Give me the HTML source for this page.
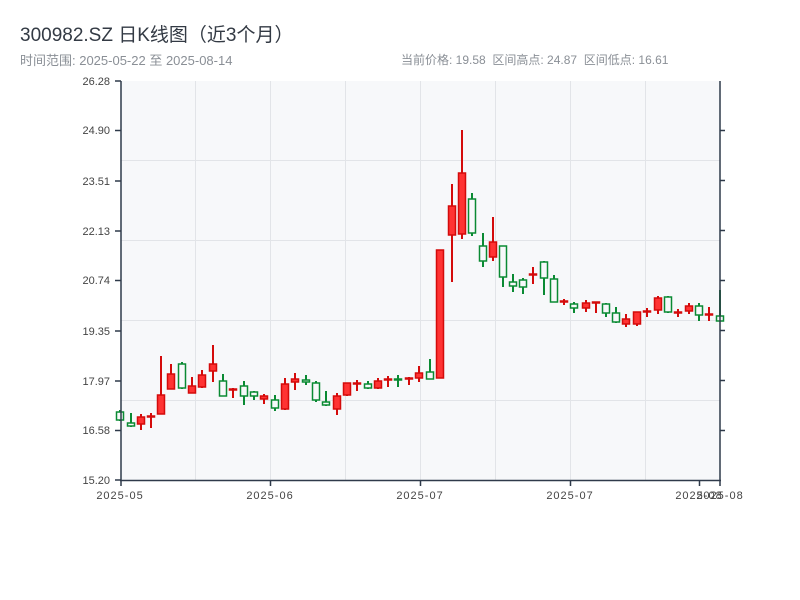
<!DOCTYPE html>
<html><head><meta charset="utf-8"><style>
body{margin:0;background:#fff;width:800px;height:600px;overflow:hidden;font-family:"Liberation Sans","Noto Sans CJK SC",sans-serif}
.t{position:absolute;left:20px;top:20px;font-size:19px;color:#333a44}
.s{position:absolute;left:20px;top:50px;font-size:13px;color:#8a8f96}
.r{position:absolute;left:401px;top:51px;font-size:12px;color:#8a8f96;white-space:pre}
svg{position:absolute;left:0;top:0}
</style></head><body>
<div class="t">300982.SZ 日K线图（近3个月）</div>
<div class="s">时间范围: 2025-05-22 至 2025-08-14</div>
<div class="r">当前价格: 19.58  区间高点: 24.87  区间低点: 16.61</div>
<svg id="c" width="800" height="600" xmlns="http://www.w3.org/2000/svg" font-family="Liberation Sans, sans-serif" font-size="11" fill="#444">
<rect x="121" y="81" width="599" height="399" fill="#f7f8fa"/>
<g stroke="#e2e4e8" stroke-width="1">
<line x1="195.5" y1="81" x2="195.5" y2="480"/><line x1="270.5" y1="81" x2="270.5" y2="480"/>
<line x1="345.5" y1="81" x2="345.5" y2="480"/><line x1="420.5" y1="81" x2="420.5" y2="480"/>
<line x1="495.5" y1="81" x2="495.5" y2="480"/><line x1="570.5" y1="81" x2="570.5" y2="480"/>
<line x1="645.5" y1="81" x2="645.5" y2="480"/>
<line x1="121" y1="160.5" x2="720" y2="160.5"/><line x1="121" y1="240.5" x2="720" y2="240.5"/>
<line x1="121" y1="320.5" x2="720" y2="320.5"/><line x1="121" y1="400.5" x2="720" y2="400.5"/>
</g>
<g id="k"></g>
<g stroke="#2f3a4a" stroke-width="1.5" fill="none">
<line x1="121" y1="81" x2="121" y2="481"/><line x1="720" y1="81" x2="720" y2="481"/>
<line x1="120" y1="480.5" x2="721" y2="480.5"/>
<path d="M115 81h6M115 130.5h6M115 181h6M115 231h6M115 280.5h6M115 331h6M115 381h6M115 430.5h6M115 480h6"/>
<path d="M720 130.5h5M720 180.5h5M720 230.5h5M720 280.5h5M720 330.5h5M720 380.5h5M720 430.5h5"/>
<path d="M121 480v6M270.5 480v6M420.5 480v6M570.5 480v6M699.5 480v6M720 480v6"/>
</g>
<g text-anchor="end">
<text x="110" y="85">26.28</text><text x="110" y="134">24.90</text><text x="110" y="185">23.51</text>
<text x="110" y="235">22.13</text><text x="110" y="284">20.74</text><text x="110" y="335">19.35</text>
<text x="110" y="385">17.97</text><text x="110" y="434">16.58</text><text x="110" y="484">15.20</text>
</g>
<g text-anchor="middle" letter-spacing="1">
<text x="120" y="499">2025-05</text><text x="270" y="499">2025-06</text><text x="420" y="499">2025-07</text>
<text x="570" y="499">2025-07</text><text x="699" y="499">2025-08</text><text x="720" y="499">2025-08</text>
</g>
</svg>
<script>
var d=[[120,'g',412,420,410,421],[131,'g',423,426,413,427],[141,'r',417,424,414,430],[151,'r',416,417,413,428],
[161,'r',395,414,356,414],[171,'r',374,389,364,389],[182,'g',364,388,362,389],[192,'r',386,393,377,393],
[202,'r',375,387,370,388],[213,'r',364,371,345,382],[223,'g',381,396,374,396],[233,'r',389,390,388,398],
[244,'g',386,396,381,405],[254,'g',392,396,391,400],[264,'r',396,399,394,404],[275,'g',400,408,395,411],
[285,'r',384,409,378,410],[295,'r',379,382,373,390],[306,'g',380,382,375,385],[316,'g',383,400,381,402],
[326,'g',402,405,391,406],[337,'r',396,409,393,415],[347,'r',383,395,383,396],[357,'r',383,384,380,391],
[368,'g',384,388,381,389],[378,'r',381,388,378,389],[388,'r',379,380,376,387],[398,'g',379,380,375,387],
[409,'r',378,379,377,385],[419,'r',373,378,366,382],[430,'g',372,379,359,379],[440,'r',250,378,250,378],
[452,'r',206,235,184,282],[462,'r',173,234,130,239],[472,'g',199,233,193,236],[483,'g',246,261,233,267],
[493,'r',242,257,217,261],[503,'g',246,277,246,287],[513,'g',282,286,274,292],[523,'g',280,287,278,294],
[533,'r',274,275,267,284],[544,'g',262,278,261,295],[554,'g',279,302,275,302],[564,'r',301,302,299,305],
[574,'g',304,308,302,313],[586,'r',303,308,300,312],[596,'r',302,303,302,313],[606,'g',304,313,303,317],
[616,'g',313,322,307,323],[626,'r',319,324,314,327],[637,'r',312,324,312,326],[647,'r',311,312,308,317],
[658,'r',298,310,296,314],[668,'g',297,312,296,313],[678,'r',312,313,309,317],[689,'r',306,311,303,314],
[699,'g',306,315,303,321],[709,'r',314,315,307,321],[720,'g',316,321,290,321]];
var s='';d.forEach(function(c){var col=c[1]=='r'?'#d40b0b':'#0a8a33',fill=c[1]=='r'?'#ff3333':'#f7f8fa';
s+='<line x1="'+c[0]+'" x2="'+c[0]+'" y1="'+c[4]+'" y2="'+c[5]+'" stroke="'+col+'" stroke-width="2"/>';
var h=Math.max(c[3]-c[2],1);s+='<rect x="'+(c[0]-3.5)+'" y="'+c[2]+'" width="7" height="'+h+'" fill="'+fill+'" stroke="'+col+'" stroke-width="1.5"/>';});
document.getElementById('k').innerHTML=s;
</script>
</body></html>
